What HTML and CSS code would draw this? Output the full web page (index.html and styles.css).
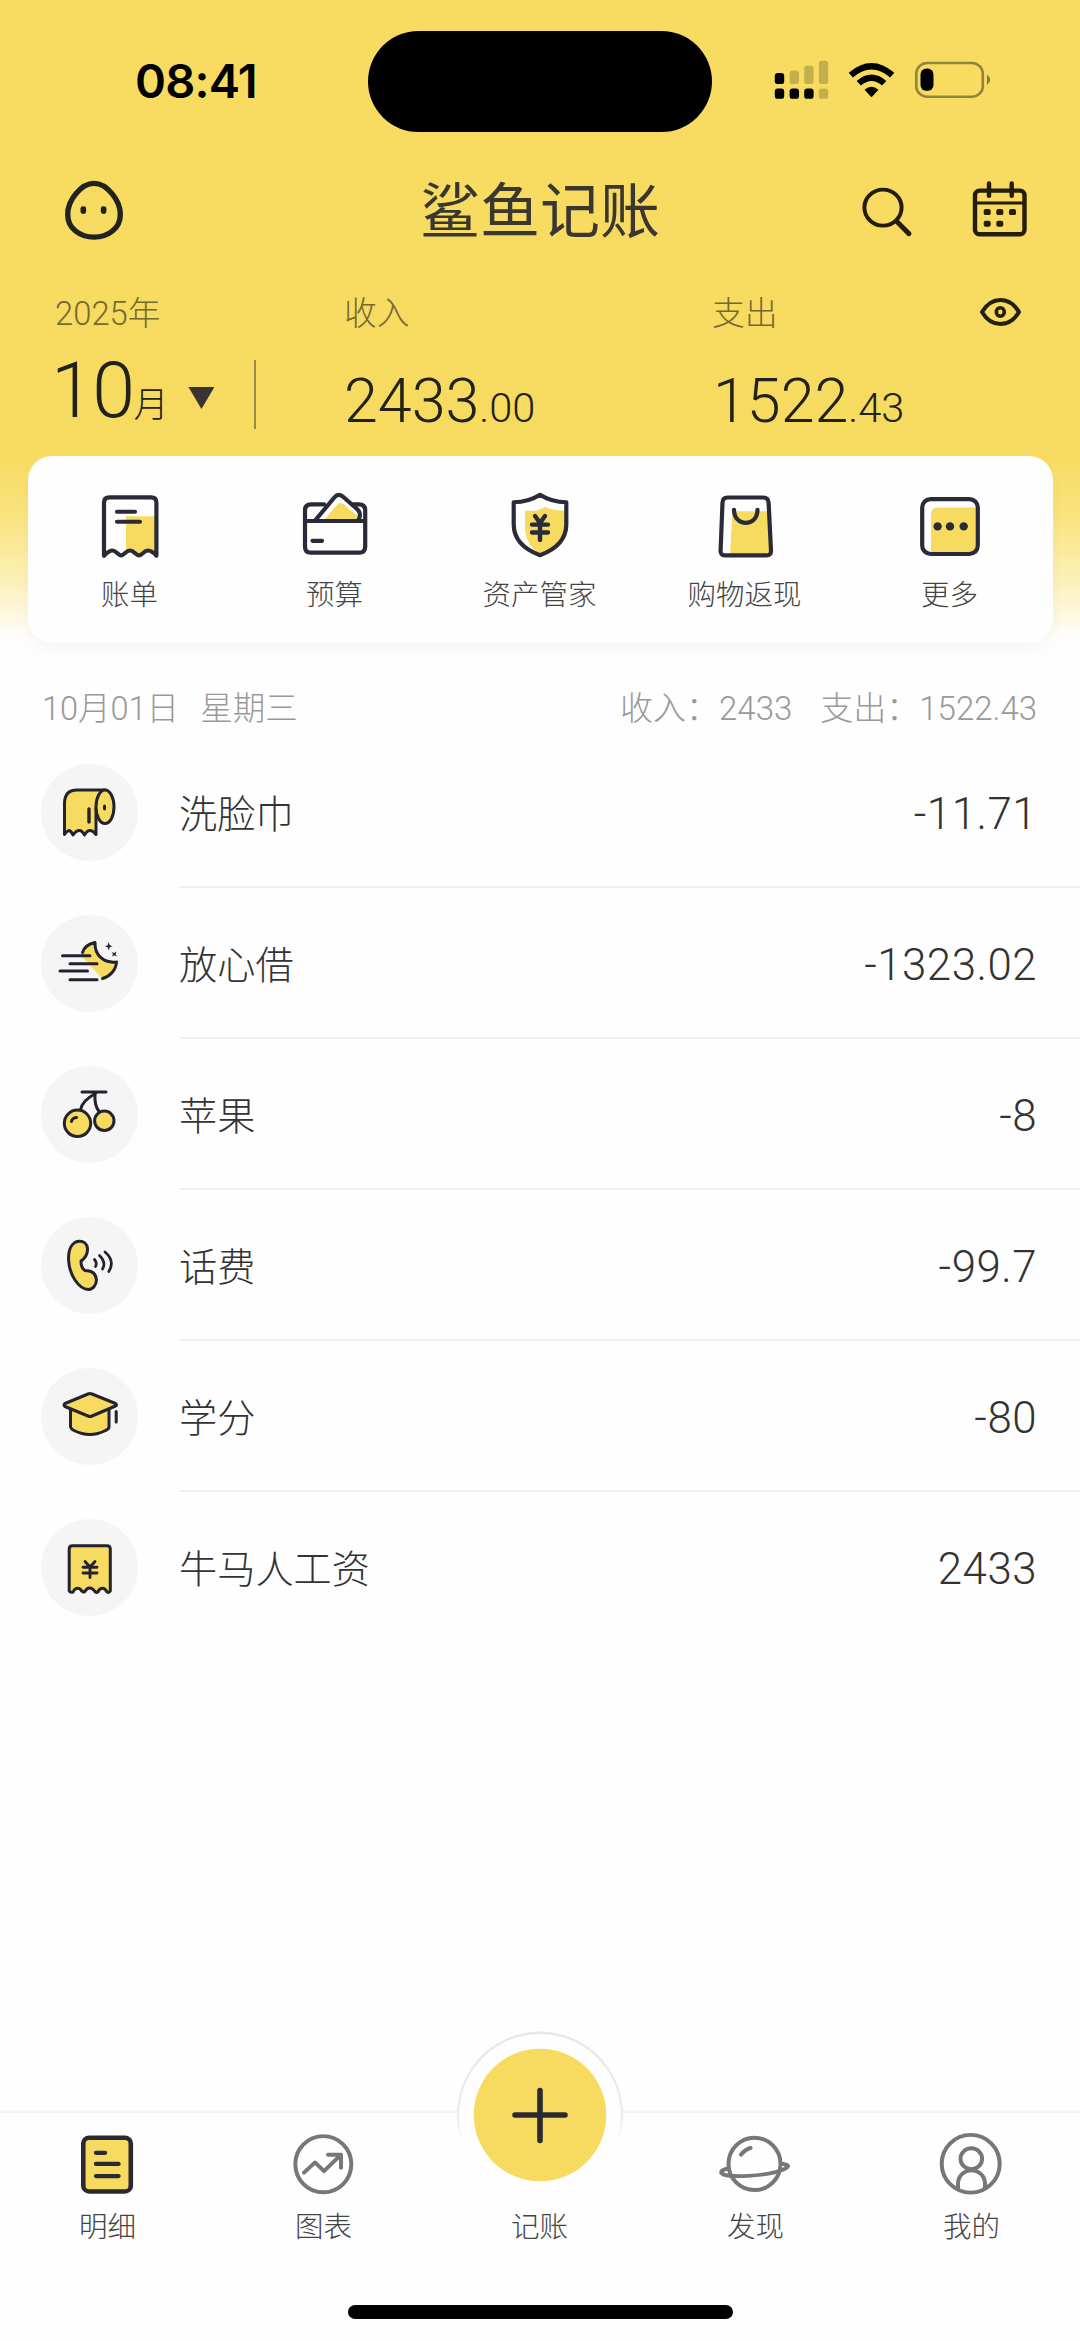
FILE: index.html
```html
<!DOCTYPE html>
<html lang="zh-CN">
<head>
<meta charset="utf-8">
<title>鲨鱼记账</title>
<link rel="stylesheet" href="styles.css">
</head>
<body>
<div class="screen">
  <div class="status">
    <div class="time">08:41</div>
    <div class="island"></div>
    <svg class="status-icons" width="222" height="48.4" viewBox="770 58 222 50" preserveAspectRatio="none">
      <g>
        <rect x="774.8" y="75.5" width="9.4" height="11.5" rx="3"/>
        <g opacity=".2"><rect x="789.6" y="73" width="9.4" height="14" rx="3"/><rect x="804.2" y="68" width="9.4" height="19" rx="3"/><rect x="818.8" y="63" width="9.4" height="24" rx="3"/><rect x="818.8" y="91.5" width="9.4" height="10.8" rx="3"/></g>
        <rect x="774.8" y="91.5" width="9.4" height="10.8" rx="3"/><rect x="789.6" y="91.5" width="9.4" height="10.8" rx="3"/><rect x="804.2" y="91.5" width="9.4" height="10.8" rx="3"/>
      </g>
      <path d="M850.8 77.8Q871.5 59.5 892.2 77.8M858.8 86.2Q871.5 74.8 884.2 86.2" fill="none" stroke="#000" stroke-width="6.4"/>
      <path d="M864.5 92.8Q871.5 86.5 878.5 92.8L871.5 100.5Z"/>
      <rect x="916.3" y="65.3" width="66.5" height="34.9" rx="11" fill="none" stroke="#000" stroke-opacity=".4" stroke-width="2.6"/>
      <rect x="920.5" y="71" width="13" height="23" rx="6"/>
      <path d="M987 77Q993.5 82.5 987 88Z" opacity=".45"/>
    </svg>
  </div>

  <header class="appbar">
    <svg class="avatar" width="60" height="62" viewBox="64 186 60 64" preserveAspectRatio="none">
      <path d="M94 189.5C107 189.5 120.3 207 120.3 221.5C120.3 236 108 245 94 245C80 245 67.7 236 67.7 221.5C67.7 207 81 189.5 94 189.5Z" fill="none" stroke="#222220" stroke-width="5.4"/>
      <rect x="80.5" y="213" width="5.6" height="8" rx="2.5" fill="#222220"/><rect x="100.8" y="213" width="5.6" height="8" rx="2.5" fill="#222220"/>
    </svg>
    <h1 class="brand">鲨鱼记账</h1>
    <svg width="168" height="62" viewBox="860 186 168 64" preserveAspectRatio="none" fill="none" stroke="#261c0c" stroke-linecap="round">
      <circle cx="883" cy="214.5" r="18.6" stroke-width="4"/><path d="M896.5 228.5L909 241.5" stroke-width="5"/>
      <rect x="975" y="197" width="49.5" height="45" rx="4.5" stroke-width="4.4"/>
      <path d="M976 209.8H1023.5" stroke-width="3"/>
      <path d="M989 189.5V202.5M1011.7 189.5V202.5" stroke-width="4.4"/>
      <g fill="#261c0c" stroke="none"><rect x="983.7" y="216" width="7" height="6.2" rx="2"/><rect x="996.3" y="216" width="7" height="6.2" rx="2"/><rect x="1009" y="216" width="7" height="6.2" rx="2"/><rect x="983.7" y="228" width="7" height="6.2" rx="2"/><rect x="996.3" y="228" width="7" height="6.2" rx="2"/></g>
    </svg>
  </header>

  <section class="summary">
    <div class="month">
      <div class="caption">2025年</div>
      <div class="month-pick"><span class="month-num">10</span><span class="month-unit">月</span><i class="caret"></i><i class="divider"></i></div>
    </div>
    <div class="total">
      <div class="caption">收入</div>
      <div class="sum">2433<small>.00</small></div>
    </div>
    <div class="total">
      <div class="caption">支出</div>
      <div class="sum sum-out">1522<small>.43</small></div>
    </div>
    <svg class="eye" width="44" height="33" viewBox="978 297 44 34" preserveAspectRatio="none" fill="none" stroke="#222018" stroke-linejoin="round">
      <path d="M982 313.5C991.5 297 1009.5 297 1019 313.5C1009.5 330 991.5 330 982 313.5Z" stroke-width="4"/>
      <ellipse cx="1000.3" cy="313.5" rx="4" ry="4.3" stroke-width="3.6"/>
    </svg>
  </section>

  <nav class="shortcuts">
    <div class="shortcut">
      <svg width="72" height="69.7" viewBox="94 492 72 72" preserveAspectRatio="none" fill="none" stroke="#2b2a38" stroke-width="4.2" stroke-linecap="round" stroke-linejoin="round">
        <path d="M126 518H156V557L148 553L139 558L130 553L126 556Z" fill="#f7db60" stroke="none"/>
        <path d="M104 559V504Q104 498.6 109.5 498.6H151Q156.4 498.6 156.4 504V559Q152 553.5 148 553.5C144 553.5 142 558.5 139 558.5C136 558.5 134 553.5 130 553.5C126 553.5 124 558.5 121 558.5C118 558.5 116 553.5 112.5 553.5Q109 553.5 104 559ZM117 513.5H135M117 523.7H140"/>
      </svg>
      <span>账单</span>
    </div>
    <div class="shortcut">
      <svg width="72" height="69.7" viewBox="299 492 72 72" preserveAspectRatio="none" fill="none" stroke="#2b2a38" stroke-width="4.2" stroke-linecap="round" stroke-linejoin="round">
        <path d="M324 522L336.5 507Q340 502.5 344 506L356 516.5Q359 519 357 522Z" fill="#f7db60" stroke="none"/>
        <path d="M324 505.8H311Q305 505.8 305 512V549.5Q305 555.7 311 555.7H359Q365.2 555.7 365.2 549.5V512Q365.2 505.8 359 505.8H352M305 523H365M312.5 543.5H322"/>
        <path d="M315.5 522L334.5 498.5Q338.2 494 342.5 497.5L357 510.5Q362 515 358.5 522"/>
      </svg>
      <span>预算</span>
    </div>
    <div class="shortcut">
      <svg width="72" height="69.7" viewBox="504 491 72 71" preserveAspectRatio="none" fill="none" stroke="#2b2a38" stroke-width="4.2" stroke-linecap="round" stroke-linejoin="round">
        <path d="M525 511H536Q541 510 545 507Q551 511 566 511V525C566 541 555 551 540 556C530 548 525 540 525 528Z" fill="#f7db60" stroke="none"/>
        <path d="M513.7 502.5C525 502.3 532 500 540 494.8C548 500 555 502.3 566.3 502.5V525C566.3 541 556 550.5 540 556.5C524 550.5 513.7 541 513.7 525Z"/>
        <path d="M535 516.5L540 523.5L545 516.5M540 524V541M532 525.3H548M532 533.3H548" stroke-width="4.4"/>
      </svg>
      <span>资产管家</span>
    </div>
    <div class="shortcut">
      <svg width="72" height="69.7" viewBox="709 492 72 72" preserveAspectRatio="none" fill="none" stroke="#2b2a38" stroke-width="4.2" stroke-linecap="round" stroke-linejoin="round">
        <path d="M732.5 513H768L770 558H730Z" fill="#f7db60" stroke="none"/>
        <path d="M727.5 498.7H763Q768.3 498.7 768.6 504L771 553.5Q771.2 558.5 766.5 558.5H725Q720.3 558.5 720.6 553.5L722.5 504Q722.7 498.7 727.5 498.7ZM734 511.3C734 529.5 757.5 529.5 757.5 511.3"/>
      </svg>
      <span>购物返现</span>
    </div>
    <div class="shortcut">
      <svg width="72" height="69.7" viewBox="914 492 72 72" preserveAspectRatio="none" fill="none" stroke="#2b2a38" stroke-width="4.2">
        <path d="M931 557V516Q931 509 938 509H978V557Z" fill="#f7db60" stroke="none"/>
        <rect x="922.2" y="500.4" width="55.6" height="56.6" rx="8.5"/>
        <g fill="#2b2a38" stroke="none"><circle cx="937.6" cy="528.6" r="4.2"/><circle cx="950" cy="528.6" r="4.2"/><circle cx="963.7" cy="528.6" r="4.2"/></g>
      </svg>
      <span>更多</span>
    </div>
  </nav>

  <main class="ledger">
    <div class="day">
      <div class="day-date"><span>10月01日</span><span>星期三</span></div>
      <div class="day-sums"><span>收入：2433</span><span>支出：1522.43</span></div>
    </div>

    <div class="entry">
      <svg class="badge" viewBox="41 763.5 97 97">
        <path d="M64.5 834V803Q64.5 789.5 77 789.5H105L96 808V834Q93 830 90 830Q87 830 84.5 834.5Q82 830 79.5 830Q76 830 73 834.5Q71 830 68.5 830Q66.5 831 64.5 834Z" fill="#f7db60"/>
        <ellipse cx="105" cy="806.3" rx="9" ry="16.8" fill="#f7db60"/>
        <path d="M89 808.5V821.5" stroke-width="3.4"/><ellipse cx="104.5" cy="807" rx=".6" ry="2" stroke-width="2"/>
      </svg>
      <div class="entry-body"><span>洗脸巾</span><span class="amount">-11.71</span></div>
    </div>
    <div class="entry">
      <svg class="badge" viewBox="41 914.5 97 97">
        <path d="M82.5 952Q85 944 95 942C94.5 955 104 963 116.5 961.5C116 969.5 110 976.5 102 978L83 957Z" fill="#f7db60" stroke="none"/>
        <path d="M82.5 952Q85 944 95 942C94.5 955 104 963 116.5 961.5C116 969.5 110 976 102.5 978M62.5 955.3H90M70 963.2H97M60 970.4H87.5M70 979.3H97"/>
        <path d="M108.7 941.5L109.7 944.7L112.5 945.7L109.7 946.7L108.7 950L107.7 946.7L105 945.7L107.7 944.7ZM116.5 951L115.5 953.7L117 956L114.3 954.7L112 956L113 953.5L111.7 951.5L114.2 952.5Z" fill="#23222e" stroke="none"/>
      </svg>
      <div class="entry-body"><span>放心借</span><span class="amount">-1323.02</span></div>
    </div>
    <div class="entry">
      <svg class="badge" viewBox="41 1066 97 97">
        <path d="M82 1092H106M95.5 1093.5C87 1098 81.5 1103 80.5 1110M95 1094C94.5 1102 95.5 1107 99 1111.5"/>
        <circle cx="77.5" cy="1123.3" r="13.2" fill="#f7db60"/><circle cx="104.3" cy="1120.8" r="9.7" fill="#f7db60"/>
        <path d="M71.5 1121.5Q72 1118 76.5 1117.5"/>
      </svg>
      <div class="entry-body"><span>苹果</span><span class="amount">-8</span></div>
    </div>
    <div class="entry">
      <svg class="badge" viewBox="41 1217 97 97">
        <path d="M79 1241.3C71.5 1242 68.5 1250 68.5 1259C69 1275 79 1289.5 88.5 1289.5C94 1289.5 96.8 1283 96.3 1279C95.5 1272.5 90.5 1270.5 85 1270.5C81.5 1268.5 81 1264 81 1261C86 1257.5 87.8 1253 87.5 1248.5C87 1243.5 83.5 1241 79 1241.3Z" fill="#f7db60"/>
        <path d="M94.5 1259.5Q97.5 1263 95.5 1266.5M99.5 1255.5Q106.5 1262.5 102.5 1269M105 1252Q115.5 1261 108.8 1271.5" stroke-width="2.7"/>
      </svg>
      <div class="entry-body"><span>话费</span><span class="amount">-99.7</span></div>
    </div>
    <div class="entry">
      <svg class="badge" viewBox="41 1368 97 97">
        <path d="M70.5 1406V1427Q71 1429 74 1430.5Q90 1438.5 105.5 1430.5Q109 1429 109 1427V1406Z" fill="#f7db60"/>
        <path d="M65 1403.5L88 1394Q90 1393.2 92 1394L115.5 1403.5Q117.5 1405 115.5 1406L92 1416Q90 1416.8 88 1416L65 1406.5Q63 1405 65 1403.5Z" fill="#f7db60"/>
        <path d="M116.2 1411.5V1422"/>
      </svg>
      <div class="entry-body"><span>学分</span><span class="amount">-80</span></div>
    </div>
    <div class="entry">
      <svg class="badge" viewBox="41 1519 97 97">
        <path d="M69.2 1591V1549Q69.2 1545.8 72.5 1545.8H107Q110.3 1545.8 110.3 1549V1591Q109 1593 107 1592Q104.5 1587.5 101.5 1588.5Q99 1589 98 1592Q96 1593 94.5 1591Q92 1587.5 89 1588Q86.5 1588.5 84.5 1592Q82 1592 81 1590Q79 1587.5 76 1588.5Q74.5 1589 73 1592Q70.5 1593 69.2 1591Z" fill="#f7db60"/>
        <path d="M85 1561.5L90 1567L95 1561.5M90 1567V1577.5M83 1567.3H97M83 1573H97" stroke-width="2.9"/>
      </svg>
      <div class="entry-body"><span>牛马人工资</span><span class="amount">2433</span></div>
    </div>
  </main>

  <footer class="tabs">
    <div class="tab">
      <svg width="80" height="67.8" viewBox="68 2134 80 70" preserveAspectRatio="none" fill="none" stroke="#2b2a33" stroke-width="4.6" stroke-linecap="round">
        <rect x="83.3" y="2142" width="47.5" height="55.5" rx="6" fill="#f7db60"/><path d="M96 2157.5H105M96 2169H118.5M96 2181.6H118.5" stroke-width="4.4"/>
      </svg><span>明细</span>
    </div>
    <div class="tab">
      <svg width="80" height="67.8" viewBox="284 2134 80 70" preserveAspectRatio="none" fill="none" stroke="#777" stroke-width="4" stroke-linecap="round" stroke-linejoin="round">
        <ellipse cx="323.3" cy="2169.3" rx="28" ry="29"/><path d="M304 2178L315 2167.5L324 2176.5L340 2160.5M328 2159.5H341V2173"/>
      </svg><span>图表</span>
    </div>
    <div class="tab tab-add">
      <svg class="fab" width="172" height="155" viewBox="454 2029 172 155">
        <defs><linearGradient id="ring" gradientUnits="userSpaceOnUse" x1="0" y1="2032" x2="0" y2="2144"><stop offset="0" stop-color="#e7e7e7"/><stop offset=".75" stop-color="#ededed"/><stop offset="1" stop-color="#fefefe"/></linearGradient></defs>
        <path d="M463 2143A82 82 0 1 1 617 2143Z" fill="#fefefe"/>
        <path d="M463 2143A82 82 0 1 1 617 2143" fill="none" stroke="url(#ring)" stroke-width="2.4"/>
        <circle cx="540" cy="2115" r="66.3" fill="#f7db60"/>
        <path d="M515 2115H565M540 2090.5V2140.5" stroke="#2b2a33" stroke-width="5.6" stroke-linecap="round"/>
      </svg><span>记账</span>
    </div>
    <div class="tab">
      <svg width="80" height="67.8" viewBox="716 2134 80 70" preserveAspectRatio="none" fill="none" stroke="#777" stroke-width="4" stroke-linecap="round" stroke-linejoin="round">
        <ellipse cx="754.5" cy="2169" rx="26" ry="27"/>
        <path d="M728.5 2173.5Q720 2175.5 721.5 2178.5C725 2184 768 2182 784 2174.5Q790 2171.5 787 2170L781 2168.5M741 2159.5Q744.5 2154.5 750.5 2152.5"/>
      </svg><span>发现</span>
    </div>
    <div class="tab">
      <svg width="80" height="67.8" viewBox="932 2134 80 70" preserveAspectRatio="none" fill="none" stroke="#777" stroke-width="4" stroke-linecap="round">
        <ellipse cx="970.7" cy="2168.8" rx="29" ry="29.8"/><circle cx="971.3" cy="2163.7" r="10.8"/><path d="M958 2194V2190C958 2171 985 2171 985 2190V2194"/>
      </svg><span>我的</span>
    </div>
  </footer>
  <div class="home"></div>
</div>
</body>
</html>
```
FILE: styles.css
```css
* { box-sizing: border-box; }
body { margin: 0; }
svg { display: block; flex: none; }

.screen {
  width: 1080px;
  height: 2341px;
  display: flex;
  flex-direction: column;
  overflow: hidden;
  color: #333;
  font-family: Roboto, "Noto Sans CJK SC", sans-serif;
  font-weight: 300;
  background: linear-gradient(#f7dc61 0, #f7db60 455px, #f9e37f 515px, #fcf0b8 580px, #fefefe 640px);
}

/* Status bar */
.status {
  height: 145px;
  padding-top: 31px;
  display: grid;
  grid-template-columns: 368px 344px 368px;
  grid-template-rows: 101px;
  align-items: center;
}
.time {
  padding: 0 0 2px 135px;
  font: 600 47px/60px Inter, sans-serif;
  letter-spacing: -0.8px;
  color: #000;
}
.island { height: 101px; border-radius: 51px; background: #000; }
.status-icons { margin: 0 0 2px 58px; }

/* Title bar */
.appbar {
  height: 132px;
  padding: 0 52px;
  display: grid;
  grid-template-columns: 168px 1fr 168px;
  align-items: center;
}
.avatar { margin-left: 12px; }
.brand {
  margin: 0;
  padding-bottom: 9px;
  text-align: center;
  font: 400 60px/64px "Noto Sans CJK SC", sans-serif;
  color: #3a3630;
}

/* Monthly totals */
.summary {
  height: 179px;
  padding: 13px 58px 0 55px;
  display: grid;
  grid-template-columns: 289px 368px 1fr 44px;
}
.caption { height: 48px; font-size: 32.8px; line-height: 49px; color: #75692f; }
.month-pick { height: 106px; display: flex; align-items: baseline; line-height: 106px; color: #22211a; }
.month-num { margin-left: -4px; font-size: 77px; letter-spacing: -1.5px; }
.month-unit { margin-left: 0; font-size: 35px; }
.caret {
  width: 26px;
  height: 22px;
  margin: 14px 0 0 20px;
  align-self: center;
  background: #3a3331;
  clip-path: polygon(0 0, 100% 0, 50% 100%);
}
.divider { width: 2px; height: 69px; margin: 7px 0 0 40px; align-self: center; background: #9a8a45; }
.sum { font-size: 61px; line-height: 126px; color: #22211a; }
.sum small { font-size: 41.5px; }
.sum-out { padding-left: 1px; }
.eye { margin-top: 6px; }

/* Shortcut card */
.shortcuts {
  height: 187px;
  margin: 0 27.5px;
  padding-top: 34.7px;
  display: grid;
  grid-template-columns: repeat(5, 1fr);
  border-radius: 24px;
  background: #fefefe;
  box-shadow: 0 8px 16px rgba(0, 0, 0, .03);
}
.shortcut, .tab { display: flex; flex-direction: column; align-items: center; font-size: 28.5px; color: #444; }
.shortcut span { margin: 15.6px 1px 0 0; line-height: 40px; }

/* Transactions */
.day {
  height: 116px;
  padding: 38px 43px 0 42px;
  display: flex;
  justify-content: space-between;
  font-size: 32.5px;
  line-height: 56px;
  color: #999;
}
.day-date { display: flex; gap: 21px; }
.day-sums { display: flex; gap: 28px; font-size: 33px; }
.entry { height: 151.1px; padding-left: 41px; display: flex; align-items: flex-start; }
.badge {
  width: 97px;
  height: 97px;
  margin-top: 4.5px;
  border-radius: 50%;
  background: #f5f5f5;
  fill: none;
  stroke: #23222e;
  stroke-width: 3;
  stroke-linecap: round;
  stroke-linejoin: round;
}
.entry-body {
  flex: 1;
  height: 129px;
  margin-left: 41px;
  padding-right: 43px;
  display: flex;
  justify-content: space-between;
  border-bottom: 2px solid #f1f1f1;
  font-size: 38.2px;
  line-height: 113px;
}
.entry:last-child .entry-body { border: 0; }
.amount { font-size: 43.8px; line-height: 111px; letter-spacing: .5px; }

/* Tab bar */
.tabs {
  height: 195px;
  margin-top: auto;
  padding-top: 16.7px;
  display: grid;
  grid-template-columns: repeat(5, 1fr);
  border-top: 3px solid #f5f5f5;
}
.tab { position: relative; }
.tab span { margin: 10.5px 1px 0 0; line-height: 40px; }
.tab-add { padding-top: 67.8px; }
.fab { position: absolute; top: -100.7px; left: 22px; }
.home { width: 385px; height: 14px; margin: 0 auto 22px; border-radius: 7px; background: #000; }
```
